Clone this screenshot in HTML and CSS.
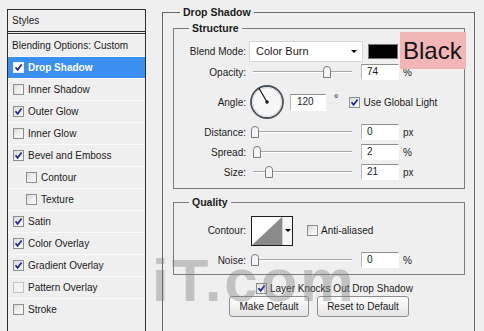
FILE: index.html
```html
<!DOCTYPE html>
<html lang="en">
<head>
    <meta charset="UTF-8">
    <title>Layer Style - Drop Shadow</title>
    <link rel="stylesheet" href="styles.css">
</head>
<body>

    <div class="dialog">
        <div class="styles-list">
            <div class="list-head">Styles</div>
            <div class="item first">Blending Options: Custom</div>
            <div class="item selected"><span class="cb on"><svg viewBox="0 0 9 9"><path d="M1.5 4.2 L3.6 6.8 L7.6 1.4"/></svg></span>Drop Shadow</div>
            <div class="item"><span class="cb"></span>Inner Shadow</div>
            <div class="item"><span class="cb on"><svg viewBox="0 0 9 9"><path d="M1.5 4.2 L3.6 6.8 L7.6 1.4"/></svg></span>Outer Glow</div>
            <div class="item"><span class="cb"></span>Inner Glow</div>
            <div class="item"><span class="cb on"><svg viewBox="0 0 9 9"><path d="M1.5 4.2 L3.6 6.8 L7.6 1.4"/></svg></span>Bevel and Emboss</div>
            <div class="item sub"><span class="cb"></span>Contour</div>
            <div class="item sub"><span class="cb"></span>Texture</div>
            <div class="item"><span class="cb on"><svg viewBox="0 0 9 9"><path d="M1.5 4.2 L3.6 6.8 L7.6 1.4"/></svg></span>Satin</div>
            <div class="item"><span class="cb on"><svg viewBox="0 0 9 9"><path d="M1.5 4.2 L3.6 6.8 L7.6 1.4"/></svg></span>Color Overlay</div>
            <div class="item"><span class="cb on"><svg viewBox="0 0 9 9"><path d="M1.5 4.2 L3.6 6.8 L7.6 1.4"/></svg></span>Gradient Overlay</div>
            <div class="item"><span class="cb faint"></span>Pattern Overlay</div>
            <div class="item"><span class="cb"></span>Stroke</div>
        </div>

        <fieldset class="group outer">
            <legend>Drop Shadow</legend>

            <fieldset class="group">
                <legend>Structure</legend>

                <div class="row blend-row">
                    <span class="lbl">Blend Mode:</span>
                    <div class="select">Color Burn<span class="drop-arrow"></span></div>
                    <span class="swatch"></span>
                </div>

                <div class="row">
                    <span class="lbl">Opacity:</span>
                    <div class="slider"><svg class="thumb" style="left: 72px" viewBox="0 0 8 12"><path d="M0.5 3.5 Q0.5 0.5 4 0.5 Q7.5 0.5 7.5 3.5 V11.5 H0.5 Z"/></svg></div>
                    <span class="num">74</span>
                    <span class="unit">%</span>
                </div>

                <div class="row angle-row">
                    <span class="lbl">Angle:</span>
                    <svg class="dial" width="36" height="36" viewBox="0 0 36 36">
                        <circle cx="18" cy="18" r="16" fill="#f7f7f7" stroke="#4c525c" stroke-width="1.8"/>
                        <circle cx="18" cy="18" r="14.4" fill="none" stroke="#dadada" stroke-width="1"/>
                        <line x1="18" y1="18" x2="10" y2="4.3" stroke="#111" stroke-width="1.2"/>
                        <circle cx="18" cy="18" r="1.7" fill="#111"/>
                    </svg>
                    <span class="num angle">120</span>
                    <span class="deg">°</span>
                    <span class="cb on global"><svg viewBox="0 0 9 9"><path d="M1.5 4.2 L3.6 6.8 L7.6 1.4"/></svg></span>
                    <span class="cb-text">Use Global Light</span>
                </div>

                <div class="row">
                    <span class="lbl">Distance:</span>
                    <div class="slider"><svg class="thumb" style="left: 0px" viewBox="0 0 8 12"><path d="M0.5 3.5 Q0.5 0.5 4 0.5 Q7.5 0.5 7.5 3.5 V11.5 H0.5 Z"/></svg></div>
                    <span class="num">0</span>
                    <span class="unit">px</span>
                </div>

                <div class="row">
                    <span class="lbl">Spread:</span>
                    <div class="slider"><svg class="thumb" style="left: 2px" viewBox="0 0 8 12"><path d="M0.5 3.5 Q0.5 0.5 4 0.5 Q7.5 0.5 7.5 3.5 V11.5 H0.5 Z"/></svg></div>
                    <span class="num">2</span>
                    <span class="unit">%</span>
                </div>

                <div class="row">
                    <span class="lbl">Size:</span>
                    <div class="slider"><svg class="thumb" style="left: 14px" viewBox="0 0 8 12"><path d="M0.5 3.5 Q0.5 0.5 4 0.5 Q7.5 0.5 7.5 3.5 V11.5 H0.5 Z"/></svg></div>
                    <span class="num">21</span>
                    <span class="unit">px</span>
                </div>
            </fieldset>

            <fieldset class="group quality">
                <legend>Quality</legend>

                <div class="row contour-row">
                    <span class="lbl">Contour:</span>
                    <div class="contour">
                        <svg class="curve" width="30" height="28" viewBox="0 0 30 28"><polygon points="0,28 30,0 30,28" fill="#8b8b8b"/></svg>
                        <span class="contour-btn"><span class="drop-arrow"></span></span>
                    </div>
                    <span class="cb anti"></span>
                    <span class="cb-text">Anti-aliased</span>
                </div>

                <div class="row">
                    <span class="lbl">Noise:</span>
                    <div class="slider"><svg class="thumb" style="left: 0px" viewBox="0 0 8 12"><path d="M0.5 3.5 Q0.5 0.5 4 0.5 Q7.5 0.5 7.5 3.5 V11.5 H0.5 Z"/></svg></div>
                    <span class="num">0</span>
                    <span class="unit">%</span>
                </div>
            </fieldset>

            <div class="knock">
                <span class="cb on"><svg viewBox="0 0 9 9"><path d="M1.5 4.2 L3.6 6.8 L7.6 1.4"/></svg></span>
                <span class="cb-text">Layer Knocks Out Drop Shadow</span>
            </div>

            <div class="buttons">
                <button class="btn make">Make Default</button>
                <button class="btn reset">Reset to Default</button>
            </div>
        </fieldset>
    </div>

    <div class="note-black">Black</div>
    <div class="watermark">iT.com</div>

</body>
</html>
```

FILE: styles.css
```css
* {
    box-sizing: border-box;
}

html,
body {
    margin: 0;
    height: 100%;
    overflow: hidden;
}

body {
    background-color: #efefef;
    font-family: "Liberation Sans", Arial, sans-serif;
    font-size: 10px;
    color: #1b1b1b;
    position: relative;
}

.dialog {
    display: flex;
    align-items: flex-start;
}

/* left list of styles */
.styles-list {
    width: 139px;
    height: 340px;
    margin: 9px 0 0 7px;
    border: 1px solid #2e2e2e;
    border-bottom: none;
}

.list-head {
    height: 24px;
    line-height: 21px;
    padding-left: 4px;
    border-bottom: 3px double #2e2e2e;
}

.item {
    display: flex;
    align-items: center;
    height: 22px;
    padding-left: 5px;
    border-top: 1px solid #fbfbfb;
}

.item.first {
    padding-left: 4px;
}

.item.sub {
    padding-left: 18px;
}

.item.selected {
    background-color: #3b8ff0;
    color: #fff;
    font-weight: bold;
}

.cb {
    flex: none;
    display: inline-flex;
    align-items: center;
    justify-content: center;
    width: 11px;
    height: 11px;
    margin-right: 4px;
    border: 1px solid #8c8f92;
    background: linear-gradient(135deg, #dcdcd5, #ffffff);
}

.cb.faint {
    border-color: #c4c4c4;
    background: #f3f3f3;
}

.selected .cb {
    border-color: #e8eef8;
    background: #fff;
}

.cb svg {
    width: 9px;
    height: 9px;
}

.cb path {
    fill: none;
    stroke: #23249a;
    stroke-width: 1.7;
}

/* group boxes */
.group {
    margin: 0;
    padding: 0 0 6px 0;
    border: 1px solid #7c7c7c;
    min-width: 0;
}

.group legend {
    font-weight: bold;
    font-size: 10.5px;
    line-height: 14px;
    padding: 0 3px;
    margin-left: 15px;
}

.outer {
    width: 313px;
    height: 340px;
    margin: 5px 0 0 16px;
    padding: 2px 9px 0 10px;
    border-color: #666;
}

.outer > legend {
    margin-left: 7px;
}

.row {
    display: flex;
    align-items: center;
    height: 20px;
}

.group > .row:first-of-type {
    margin-top: 6px;
}

.lbl {
    flex: none;
    width: 72px;
    text-align: right;
}

.blend-row {
    height: 21px;
}

.select {
    position: relative;
    width: 114px;
    height: 21px;
    margin-left: 3px;
    padding-left: 6px;
    line-height: 19px;
    font-size: 11px;
    background: #fff;
    border: 1px solid #d6d6d6;
}

.select .drop-arrow {
    position: absolute;
    right: 5px;
    top: 8px;
}

.drop-arrow {
    display: block;
    width: 0;
    height: 0;
    border-left: 3px solid transparent;
    border-right: 3px solid transparent;
    border-top: 3px solid #000;
}

.swatch {
    width: 30px;
    height: 15px;
    margin-left: 5px;
    background: #000;
    border: 1px solid #777;
}

.slider {
    position: relative;
    flex: none;
    width: 101px;
    height: 14px;
    margin-left: 5px;
}

.slider::before {
    content: "";
    position: absolute;
    left: 2px;
    right: 0;
    top: 6px;
    border-top: 1px solid #a9a9a9;
    border-bottom: 1px solid #fff;
}

.thumb {
    position: absolute;
    top: 1px;
    width: 8px;
    height: 12px;
}

.thumb path {
    fill: #f4f4f4;
    stroke: #7b7b7b;
    stroke-width: 1;
}

.num {
    flex: none;
    width: 38px;
    height: 16px;
    margin-left: 9px;
    padding-left: 5px;
    line-height: 14px;
    background: #fff;
    border-top: 1px solid #8f8f8f;
    border-left: 1px solid #b8b8b8;
    border-right: 1px solid #fff;
    border-bottom: 1px solid #fff;
}

.unit {
    margin-left: 4px;
}

.angle-row {
    height: 40px;
}

.dial {
    flex: none;
    margin-left: 3px;
}

.num.angle {
    width: 36px;
    height: 17px;
    margin-left: 5px;
    padding-left: 6px;
}

.deg {
    margin-left: 8px;
    font-size: 11px;
    align-self: flex-start;
    margin-top: 10px;
}

.cb.global {
    margin-left: 11px;
    margin-right: 3px;
}

.quality {
    margin-top: 6px;
    padding-bottom: 4px;
}

.contour-row {
    height: 31px;
}

.contour-row + .row {
    margin-top: 4px;
}

.contour {
    display: flex;
    width: 42px;
    height: 30px;
    margin-left: 5px;
    background: #fff;
    border: 1px solid #1c1c1c;
}

.curve {
    flex: none;
}

.contour-btn {
    flex: 1;
    display: flex;
    justify-content: center;
    padding-top: 12px;
    border-left: 1px solid #d0d0d0;
    background: #f6f6f6;
}

.cb.anti {
    margin-left: 14px;
    margin-right: 3px;
}

.knock {
    display: flex;
    align-items: center;
    height: 16px;
    margin: 5px 0 0 83px;
}

.knock .cb {
    margin-right: 3px;
}

.buttons {
    display: flex;
    gap: 8px;
    margin-left: 56px;
}

.btn {
    height: 21px;
    padding: 0;
    font-family: "Liberation Sans", Arial, sans-serif;
    font-size: 10px;
    color: #1b1b1b;
    background: linear-gradient(#fefefe, #e4e4e4);
    border: 1px solid #8d8d8d;
    border-radius: 3px;
}

.btn.make {
    width: 80px;
}

.btn.reset {
    width: 92px;
}

/* annotations laid over the dialog */
.note-black {
    position: absolute;
    left: 400px;
    top: 32px;
    width: 66px;
    height: 37px;
    padding-left: 3px;
    line-height: 37px;
    font-size: 24px;
    color: #141414;
    background: #f3b6b6;
}

.watermark {
    position: absolute;
    left: 152px;
    top: 246px;
    font-size: 60px;
    font-weight: bold;
    line-height: 70px;
    letter-spacing: 3px;
    color: #7a7a7a;
    opacity: 0.38;
    pointer-events: none;
}
```
